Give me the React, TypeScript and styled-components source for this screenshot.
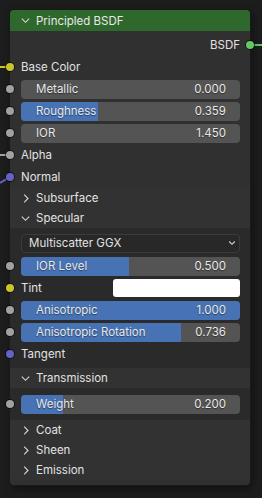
import React from 'react';
import styled, { createGlobalStyle } from 'styled-components';

const Global = createGlobalStyle`
  html, body { margin: 0; padding: 0; background: #1d1d1d; }
  body { font-family: Inter, "Noto Sans", sans-serif; width: 262px; height: 498px; overflow: hidden; }
`;

const Canvas = styled.div`
  position: relative;
  width: 262px;
  height: 498px;
  padding: 10px 0 0 10px;
  box-sizing: border-box;
  background: #1d1d1d;
`;

const Links = styled.svg`
  position: absolute;
  left: 0;
  top: 0;
  pointer-events: none;
`;

const Node = styled.div`
  position: relative;
  width: 240px;
  background: #303030;
  border-radius: 4px;
  box-shadow: 0 0 0 1px #1a1a1a, 2px 3px 8px rgba(0, 0, 0, 0.5);
  display: flex;
  flex-direction: column;
  padding-bottom: 5px;
`;

const Header = styled.div`
  height: 21px;
  background: #2f682c;
  border-radius: 4px 4px 0 0;
  display: flex;
  align-items: center;
  padding-left: 11px;
  gap: 6px;
  color: #e8e8e8;
  font-size: 11.5px;
`;

const Body = styled.div`
  display: flex;
  flex-direction: column;
  padding-top: 3px;
`;

const Row = styled.div<{ $end?: boolean; $gapAfter?: number }>`
  position: relative;
  height: 22px;
  display: flex;
  align-items: center;
  justify-content: ${(p) => (p.$end ? 'flex-end' : 'flex-start')};
  padding: 0 10px 0 11px;
  margin-bottom: ${(p) => p.$gapAfter ?? 0}px;
`;

const Socket = styled.span<{ $color: string; $right?: boolean }>`
  position: absolute;
  top: 50%;
  ${(p) => (p.$right ? 'right: -4px;' : 'left: -4px;')}
  width: 8px;
  height: 8px;
  margin-top: -4px;
  border-radius: 50%;
  background: ${(p) => p.$color};
  box-shadow: 0 0 0 1px rgba(0, 0, 0, 0.55);
`;

const Label = styled.span`
  font-size: 11.5px;
  color: #e2e2e2;
  white-space: nowrap;
`;

const Slider = styled.div`
  position: relative;
  flex: 1;
  height: 19px;
  border-radius: 4px;
  background: #545454;
  overflow: hidden;
  display: flex;
  align-items: center;
  justify-content: space-between;
  padding: 0 14px 0 15px;
  font-size: 11.5px;
  color: #e8e8e8;
  text-shadow: 0 1px 1px rgba(0, 0, 0, 0.45);
`;

const Fill = styled.div`
  position: absolute;
  left: 0;
  top: 0;
  bottom: 0;
  background: #4772b3;
`;

const SliderText = styled.span`
  position: relative;
  white-space: nowrap;
`;

const PanelHeader = styled.div`
  height: 20px;
  background: #323232;
  display: flex;
  align-items: center;
  padding-left: 11px;
  gap: 6px;
  font-size: 11.5px;
  color: #e2e2e2;
`;

const Chevron = styled.svg`
  width: 9px;
  height: 9px;
  flex: none;
`;

const PanelContent = styled.div<{ $pt?: number; $pb?: number }>`
  background: #2a2a2a;
  padding: ${(p) => p.$pt ?? 4}px 0 ${(p) => p.$pb ?? 3}px;
  display: flex;
  flex-direction: column;
`;

const Dropdown = styled.div`
  flex: 1;
  height: 19px;
  box-sizing: border-box;
  border: 1px solid #3b3b3b;
  border-radius: 4px;
  background: #282828;
  display: flex;
  align-items: center;
  justify-content: space-between;
  padding: 0 3px 0 7px;
  font-size: 11.5px;
  color: #e2e2e2;
`;

const Swatch = styled.div`
  margin-left: auto;
  width: 127px;
  height: 18px;
  border-radius: 3px;
  background: #ffffff;
`;

const FLOAT = '#a1a1a1';
const COLOR = '#c7c729';
const VECTOR = '#6363c7';
const SHADER = '#63c763';

const Down = () => (
  <Chevron viewBox="0 0 9 9">
    <polyline points="0.8,2.6 4.5,6.3 8.2,2.6" fill="none" stroke="#d6d6d6" strokeWidth="1.1" />
  </Chevron>
);

const Right = () => (
  <Chevron viewBox="0 0 9 9">
    <polyline points="3.2,0.7 7,4.5 3.2,8.3" fill="none" stroke="#d6d6d6" strokeWidth="1.1" />
  </Chevron>
);

const ValueSlider = ({ label, value, fill }: { label: string; value: string; fill: number }) => (
  <Row>
    <Socket $color={FLOAT} />
    <Slider>
      {fill > 0 && <Fill style={{ width: `${fill * 100}%` }} />}
      <SliderText>{label}</SliderText>
      <SliderText>{value}</SliderText>
    </Slider>
  </Row>
);

const Panel = ({ title, open }: { title: string; open?: boolean }) => (
  <PanelHeader>
    {open ? <Down /> : <Right />}
    <span>{title}</span>
  </PanelHeader>
);

export default function App() {
  return (
    <Canvas>
      <Global />
      <Links width={262} height={498}>
        <line x1={0} y1={67} x2={10} y2={67} stroke={COLOR} strokeWidth={2} />
        <line x1={0} y1={155} x2={10} y2={155} stroke={FLOAT} strokeWidth={2} />
        <line x1={0} y1={183} x2={10} y2={177} stroke={VECTOR} strokeWidth={2} />
        <line x1={250} y1={45} x2={262} y2={45} stroke={SHADER} strokeWidth={2} />
      </Links>
      <Node>
        <Header>
          <Down />
          <span>Principled BSDF</span>
        </Header>
        <Body>
          <Row $end>
            <Label>BSDF</Label>
            <Socket $color={SHADER} $right />
          </Row>
          <Row>
            <Socket $color={COLOR} />
            <Label>Base Color</Label>
          </Row>
          <ValueSlider label="Metallic" value="0.000" fill={0} />
          <ValueSlider label="Roughness" value="0.359" fill={0.353} />
          <ValueSlider label="IOR" value="1.450" fill={0} />
          <Row>
            <Socket $color={FLOAT} />
            <Label>Alpha</Label>
          </Row>
          <Row>
            <Socket $color={VECTOR} />
            <Label>Normal</Label>
          </Row>
          <Panel title="Subsurface" />
          <Panel title="Specular" open />
          <PanelContent>
            <Row $gapAfter={1}>
              <Dropdown>
                <span>Multiscatter GGX</span>
                <svg width="8" height="6" viewBox="0 0 8 6">
                  <polyline points="1.2,1.5 4,4.3 6.8,1.5" fill="none" stroke="#d6d6d6" strokeWidth="1.1" />
                </svg>
              </Dropdown>
            </Row>
            <ValueSlider label="IOR Level" value="0.500" fill={0.493} />
            <Row>
              <Socket $color={COLOR} />
              <Label>Tint</Label>
              <Swatch />
            </Row>
            <ValueSlider label="Anisotropic" value="1.000" fill={1} />
            <ValueSlider label="Anisotropic Rotation" value="0.736" fill={0.731} />
            <Row>
              <Socket $color={VECTOR} />
              <Label>Tangent</Label>
            </Row>
          </PanelContent>
          <Panel title="Transmission" open />
          <PanelContent $pt={5} $pb={5}>
            <ValueSlider label="Weight" value="0.200" fill={0.19} />
          </PanelContent>
          <Panel title="Coat" />
          <Panel title="Sheen" />
          <Panel title="Emission" />
        </Body>
      </Node>
    </Canvas>
  );
}
